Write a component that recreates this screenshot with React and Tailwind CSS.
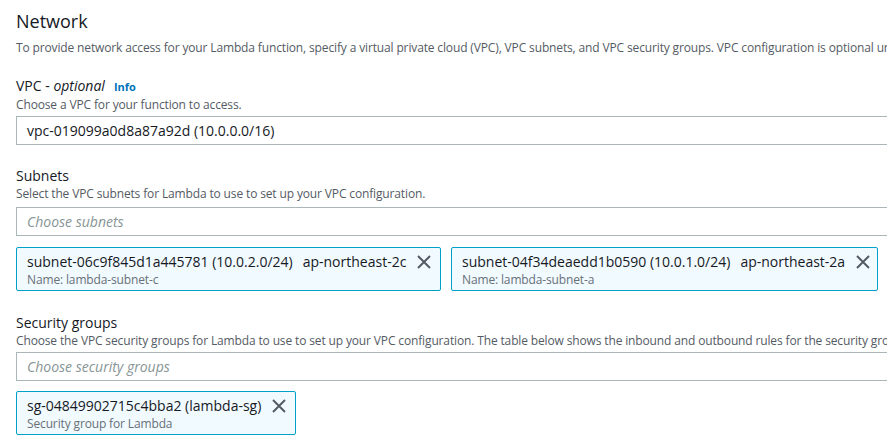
import React from "react";

function XIcon() {
  return (
    <svg width="16" height="16" viewBox="0 0 16 16" className="shrink-0">
      <path d="M2 2 L14 14 M14 2 L2 14" stroke="#545b64" strokeWidth="2" fill="none" />
    </svg>
  );
}

function Token({ title, region, sub, className }) {
  return (
    <div className={"flex items-start border border-[#00a1c9] bg-[#f1faff] rounded-[2px] pl-[10px] pr-[8px] h-[44px] pt-[4px] " + className}>
      <div className="flex flex-col">
        <div className="flex text-[14px] leading-[20px] text-[#16191f] whitespace-nowrap">
          <span>{title}</span>
          {region && <span className="ml-[10px]">{region}</span>}
        </div>
        <div className="text-[12px] leading-[16px] tracking-[-0.14px] text-[#687078] whitespace-nowrap">{sub}</div>
      </div>
      <div className="ml-auto pl-[10px] pt-[2px]"><XIcon /></div>
    </div>
  );
}

function Input({ children, placeholder }) {
  return (
    <div className="h-[29px] border border-r-0 border-[#aab7b8] flex items-center pl-[10px] text-[14px] whitespace-nowrap">
      {placeholder ? (
        <span className="italic text-[#879596]">{placeholder}</span>
      ) : (
        <span className="text-[#16191f]">{children}</span>
      )}
    </div>
  );
}

export default function App() {
  return (
    <div className="w-[887px] h-[446px] overflow-hidden bg-white pl-[16px] text-[#16191f]" style={{ fontFamily: '"Open Sans", Arial, sans-serif' }}>
      <div className="pt-[8px] text-[18px] leading-[26px]">Network</div>
      <div className="mt-[6px] text-[12px] leading-[16px] tracking-[-0.14px] text-[#545b64] whitespace-nowrap">
        To provide network access for your Lambda function, specify a virtual private cloud (VPC), VPC subnets, and VPC security groups. VPC configuration is optional unless your function requires access to resources in a VPC.
      </div>

      <div className="mt-[20px] flex items-baseline text-[14px] leading-[20px]">
        <span>VPC - <i>optional</i></span>
        <span className="ml-[9px] text-[11px] font-bold text-[#0073bb]">Info</span>
      </div>
      <div className="text-[12px] leading-[16px] tracking-[-0.14px] text-[#545b64]">Choose a VPC for your function to access.</div>
      <div className="mt-[3px]">
        <Input>vpc-019099a0d8a87a92d (10.0.0.0/16)</Input>
      </div>

      <div className="mt-[21px] text-[14px] leading-[20px]">Subnets</div>
      <div className="text-[12px] leading-[16px] tracking-[-0.14px] text-[#545b64] whitespace-nowrap">Select the VPC subnets for Lambda to use to set up your VPC configuration.</div>
      <div className="mt-[5px]">
        <Input placeholder="Choose subnets" />
      </div>
      <div className="mt-[11px] flex gap-[10px]">
        <Token className="w-[425px]" title="subnet-06c9f845d1a445781 (10.0.2.0/24)" region="ap-northeast-2c" sub="Name: lambda-subnet-c" />
        <Token className="w-[427px]" title="subnet-04f34deaedd1b0590 (10.0.1.0/24)" region="ap-northeast-2a" sub="Name: lambda-subnet-a" />
      </div>

      <div className="mt-[22px] text-[14px] leading-[20px]">Security groups</div>
      <div className="text-[12px] leading-[16px] tracking-[-0.14px] text-[#545b64] whitespace-nowrap">Choose the VPC security groups for Lambda to use to set up your VPC configuration. The table below shows the inbound and outbound rules for the security groups.</div>
      <div className="mt-[3px]">
        <Input placeholder="Choose security groups" />
      </div>
      <div className="mt-[10px] flex">
        <Token className="w-[280px]" title="sg-04849902715c4bba2 (lambda-sg)" sub="Security group for Lambda" />
      </div>
    </div>
  );
}
